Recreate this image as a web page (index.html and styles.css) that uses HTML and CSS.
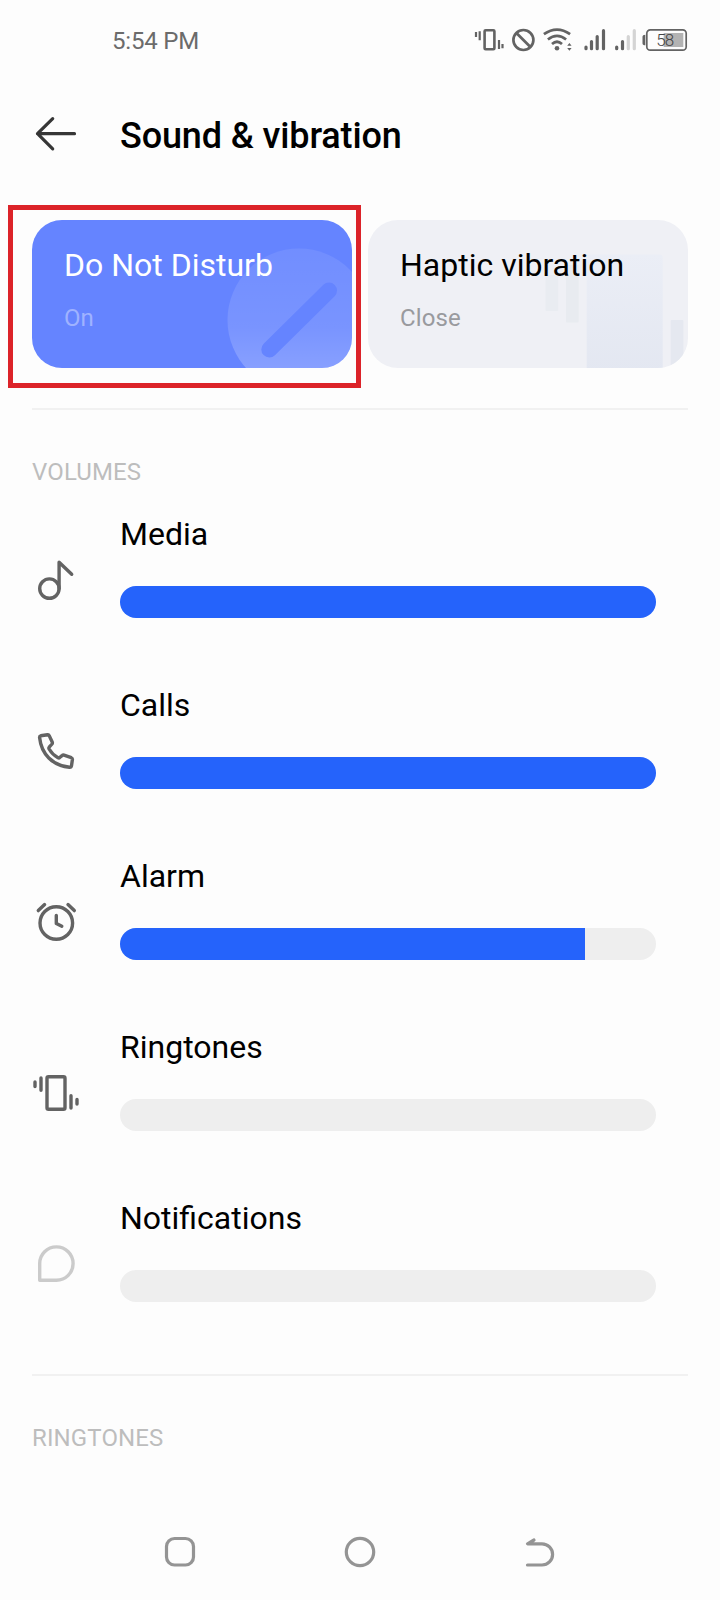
FILE: index.html
```html
<!DOCTYPE html>
<html lang="en">
<head>
  <meta charset="UTF-8" />
  <meta name="viewport" content="width=device-width, initial-scale=1.0"/>
  <title>Sound &amp; vibration</title>
  <link rel="stylesheet" href="styles.css">
</head>
<body>

<div class="screen">
  <div class="status-bar">
    <span class="time">5:54 PM</span>
    <div class="status-icons">
      <svg width="30" height="24" fill="none" stroke="#636363" stroke-width="2.2">
        <rect x="10.6" y="2.3" width="9.8" height="19" rx="1" stroke-width="2.6"/>
        <path d="M2 4v5M5.7 3.3v9M25 12v9M28.5 16v4.3"/>
      </svg>
      <svg class="block" width="24" height="24" fill="none" stroke="#636363" stroke-width="2.7">
        <circle cx="11.4" cy="12" r="10"/>
        <path d="M4.4 5l14 14"/>
      </svg>
      <svg class="wifi" width="30" height="24" fill="none" stroke="#636363" stroke-width="2.7">
        <path d="M.9 6.2Q14-3 27.100 6.200M4.900 11.500Q14 4.200 23.100 11.500M9 16Q14 11.500 19 16"/>
        <circle cx="14" cy="20.2" r="2.3" fill="#636363" stroke="none"/>
        <path d="M24.200 17.800h4.400l-2.200-2.800zM24.200 20h4.400l-2.200 2.800z" fill="#636363" stroke="none"/>
      </svg>
      <svg class="signal" width="22" height="24" fill="none" stroke="#636363" stroke-width="3.2" stroke-linecap="round">
        <path d="M2 19v1.700M7.500 13.500v7.200M13.200 8.500v12.200M19.500 2.700v18"/>
      </svg>
      <svg class="signal-2" width="22" height="24" fill="none" stroke="#636363" stroke-width="3.2" stroke-linecap="round">
        <path d="M1.700 19v1.700M7.500 13.500v7.200"/>
        <path d="M13.300 8.500v12.200M19.300 2.700v18" stroke="#d4d4d4"/>
      </svg>
      <svg class="battery" width="46" height="24">
        <path d="M3.300 6.800v10.400q-2.800 0-2.800-2v-6.400q0-2 2.800-2z" fill="#636363"/>
        <rect x="4.800" y="1.800" width="39.400" height="20.400" rx="3.500" fill="none" stroke="#636363" stroke-width="1.700"/>
        <rect x="21.700" y="5" width="19.600" height="14" fill="#b3b3b3"/>
        <text x="14.2" y="18" class="battery-text">58</text>
      </svg>
    </div>
  </div>

  <div class="header">
    <svg width="48" height="48" fill="none" stroke="#363636" stroke-width="3.2" stroke-linecap="round" stroke-linejoin="round">
      <path d="M42.500 23.700H5.500M20.700 8.700L5.500 23.700l15.200 15.200"/>
    </svg>
    <h1>Sound &amp; vibration</h1>
  </div>

  <div class="cards">
    <div class="card dnd">
      <svg class="art" width="320" height="148">
        <defs>
          <linearGradient id="dndFade" x1="0" y1="0" x2="0" y2="1">
            <stop offset="0" stop-color="#fff" stop-opacity=".08"/>
            <stop offset=".55" stop-color="#fff" stop-opacity=".13"/>
            <stop offset="1" stop-color="#fff" stop-opacity=".28"/>
          </linearGradient>
        </defs>
        <circle cx="267" cy="100" r="71.5" fill="url(#dndFade)"/>
        <path d="M237.300 129.500L297 70.500" stroke="#6584ff" stroke-width="16" stroke-linecap="round"/>
      </svg>
      <h2>Do Not Disturb</h2>
      <p>On</p>
      <div class="highlight"></div>
    </div>
    <div class="card haptic">
      <svg class="art" width="320" height="148">
        <defs>
          <linearGradient id="hapticFade" x1="0" y1="0" x2="0" y2="1">
            <stop offset="0" stop-color="#ebeef6"/>
            <stop offset="1" stop-color="#e3e7f1"/>
          </linearGradient>
        </defs>
        <rect x="177.500" y="55" width="12.700" height="36" rx="1" fill="#e9ecf1"/>
        <rect x="198" y="45" width="12.700" height="57.500" rx="1" fill="#e8ebf0"/>
        <rect x="218.700" y="34.500" width="76" height="120" rx="3" fill="url(#hapticFade)"/>
        <rect x="302.700" y="100" width="12.700" height="48" rx="1" fill="#e5e8f0"/>
      </svg>
      <h2>Haptic vibration</h2>
      <p>Close</p>
    </div>
  </div>

  <div class="section volumes">
    <h3>VOLUMES</h3>
    <div class="sliders">
      <div class="row">
        <svg class="icon" viewBox="0 0 48 48">
          <circle cx="17.4" cy="32.6" r="9.7"/>
          <path d="M27.100 32.500V6.200L39.700 18.300"/>
        </svg>
        <div class="slider">
          <span>Media</span>
          <div class="track"><div class="fill" style="width: 100%"></div></div>
        </div>
      </div>
      <div class="row">
        <svg class="icon" viewBox="0 0 48 48">
          <path d="M8.700 8.800L15.500 7.700Q16.700 7.500 17.200 8.600L20.300 15.300Q20.600 16.200 20 17L17.200 20.200Q16.600 21 17.100 22Q20.500 27.800 26 30.700Q27 31.200 27.700 30.500L30.300 28.400Q31 27.800 32 28.100L39.300 30.700Q40.500 31.200 40.400 32.500L39.500 38.800Q39.200 40.400 37.500 40.300C20.500 38.600 9.300 27 7.600 10.500Q7.500 9.100 8.700 8.800Z"/>
        </svg>
        <div class="slider">
          <span>Calls</span>
          <div class="track"><div class="fill" style="width: 100%"></div></div>
        </div>
      </div>
      <div class="row">
        <svg class="icon" viewBox="0 0 48 48">
          <circle cx="24.3" cy="25" r="16.3"/>
          <path d="M24.300 17.500V25.500L29.800 28.300M6.300 12.600L12.600 6.600M36 6.600L42.300 12.600"/>
        </svg>
        <div class="slider">
          <span>Alarm</span>
          <div class="track"><div class="fill" style="width: 86.75%"></div></div>
        </div>
      </div>
      <div class="row">
        <svg class="icon" viewBox="0 0 48 48">
          <rect x="15" y="7.7" width="18" height="32.6" rx="1.500"/>
          <path d="M3 13v4.500M9 9v12.300M39 26.700v12.300M45 30.500v4.500"/>
        </svg>
        <div class="slider">
          <span>Ringtones</span>
          <div class="track"></div>
        </div>
      </div>
      <div class="row">
        <svg class="icon muted" viewBox="0 0 48 48">
          <path d="M7.700 40.300V23.600A16.700 16.700 0 1 1 24.400 40.300Z"/>
        </svg>
        <div class="slider">
          <span>Notifications</span>
          <div class="track"></div>
        </div>
      </div>
    </div>
  </div>

  <div class="section ringtones">
    <h3>RINGTONES</h3>
  </div>

  <div class="nav-bar">
    <svg width="32" height="32"><rect x="2.5" y="2.5" width="27" height="26.5" rx="8"/></svg>
    <svg width="32" height="32"><circle cx="16" cy="16" r="13.7"/></svg>
    <svg width="32" height="32"><path d="M10 4L3.500 7.800H18A10.600 10.600 0 0 1 18 29H3.500"/></svg>
  </div>
</div>

</body>
</html>
```
FILE: styles.css
```css
:root {
  --bg: #fdfdfd;
  --accent: #2563fb;
  --track: #eeeeee;
  --icon: #636363;
  --muted: #bdbdbd;
}

* {
  box-sizing: border-box;
}

body {
  margin: 0;
  background: var(--bg);
  font-family: Roboto, sans-serif;
  color: #000;
}

h1, h2, h3, p {
  margin: 0;
  font-weight: 400;
}

svg {
  display: block;
  flex-shrink: 0;
}

.screen {
  width: 720px;
  height: 1600px;
  padding: 0 32px;
  display: flex;
  flex-direction: column;
  overflow: hidden;
}

.status-bar {
  height: 80px;
  padding-left: 80px;
  display: flex;
  justify-content: space-between;
  align-items: center;
}

.time {
  font-size: 24px;
  line-height: 30px;
  padding-top: 2px;
  letter-spacing: -0.2px;
  color: #6b6b6b;
}

.status-icons {
  display: flex;
}

.block {
  margin-left: 8px;
}

.wifi {
  margin-left: 7px;
}

.signal {
  margin-left: 11px;
}

.signal-2 {
  margin-left: 9px;
}

.battery {
  margin-left: 5px;
}

.battery-text {
  font-size: 17px;
  font-weight: 300;
  letter-spacing: -0.8px;
  fill: #444;
}

.header {
  height: 107px;
  display: flex;
  align-items: center;
  gap: 40px;
}

.header h1 {
  font-size: 36px;
  line-height: 44px;
  font-weight: 500;
  letter-spacing: -0.13px;
  padding-top: 4px;
}

.cards {
  display: grid;
  grid-template-columns: 1fr 1fr;
  gap: 16px;
  margin-top: 33px;
}

.card {
  position: relative;
  height: 148px;
  padding: 25px 32px;
  border-radius: 30px;
}

.card h2 {
  position: relative;
  font-size: 32px;
  line-height: 40px;
}

.card p {
  position: relative;
  margin-top: 18px;
  font-size: 24px;
  line-height: 30px;
  letter-spacing: 0.1px;
}

.art {
  position: absolute;
  top: 0;
  left: 0;
  border-radius: 30px;
}

.dnd {
  background: #6584ff;
  color: #fff;
}

.dnd p {
  color: #9fb2ff;
}

.haptic {
  background: #eff0f5;
}

.haptic p {
  color: #999a9e;
}

/* red frame round the Do Not Disturb card */
.highlight {
  position: absolute;
  top: -15px;
  left: -24px;
  width: 353px;
  height: 183px;
  border: 5px solid #dc2329;
}

.section {
  border-top: 2px solid #f1f1f1;
  padding-top: 47px;
}

.section h3 {
  font-size: 24px;
  line-height: 30px;
  letter-spacing: 0.12px;
  color: var(--muted);
}

.volumes {
  margin-top: 40px;
}

.ringtones {
  margin-top: 72px;
}

.sliders {
  display: flex;
  flex-direction: column;
  gap: 67px;
  margin-top: 27px;
}

.row {
  display: flex;
  gap: 40px;
  padding-right: 32px;
}

.icon {
  width: 48px;
  height: 48px;
  margin-top: 42px;
  fill: none;
  stroke: var(--icon);
  stroke-width: 3.4;
  stroke-linecap: round;
  stroke-linejoin: round;
}

.icon.muted {
  stroke: #cbcbcb;
}

.slider {
  flex: 1;
  display: flex;
  flex-direction: column;
  gap: 32px;
}

.slider span {
  font-size: 32px;
  line-height: 40px;
}

.track {
  height: 32px;
  border-radius: 16px;
  background: var(--track);
  overflow: hidden;
}

.fill {
  height: 100%;
  background: var(--accent);
}

.nav-bar {
  display: grid;
  grid-template-columns: repeat(3, 180px);
  justify-content: center;
  justify-items: center;
  margin-top: auto;
  padding-bottom: 32px;
}

.nav-bar svg {
  fill: none;
  stroke: #949494;
  stroke-width: 3.2;
  stroke-linecap: round;
  stroke-linejoin: round;
}
```
